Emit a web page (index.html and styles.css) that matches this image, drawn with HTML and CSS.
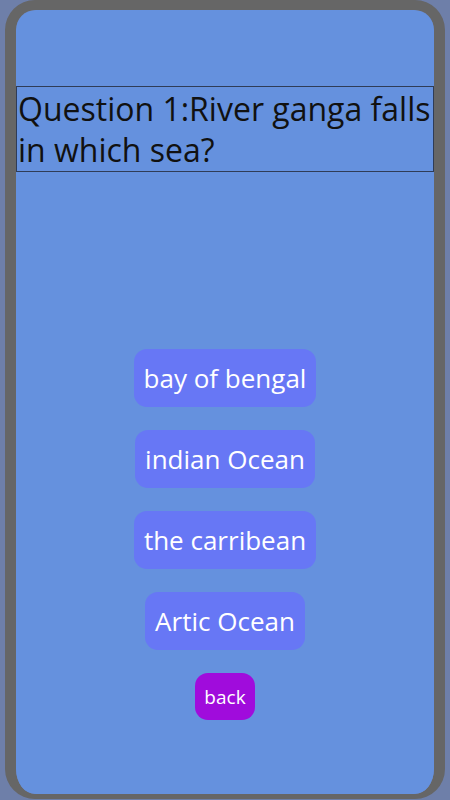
FILE: index.html
```html
<!DOCTYPE html>
<html lang="en">
<head>
    <meta charset="UTF-8">
    <meta name="viewport" content="width=device-width, initial-scale=1.0">
    <title>quiz</title>
    <link rel="stylesheet" href="styles.css">
</head>
<body>
    <main class="phone">
        <section class="screen">
            <h2 class="question">Question 1:River ganga falls in which sea?</h2>
            <div class="answers">
                <button type="button" class="btn-answer">bay of bengal</button>
                <button type="button" class="btn-answer">indian Ocean</button>
                <button type="button" class="btn-answer">the carribean</button>
                <button type="button" class="btn-answer">Artic Ocean</button>
                <button type="button" class="btn-back">back</button>
            </div>
        </section>
    </main>
</body>
</html>
```

FILE: styles.css
```css
body {
    margin: 0;
    background: #6e7fa9;
    font-family: "Open Sans", "Noto Sans", sans-serif;
}

.phone {
    margin: 0 5px;
    height: 784px;
    border: solid #666;
    border-width: 10px 11px 5px;
    border-radius: 30px;
    overflow: hidden;
}

.screen {
    height: 100%;
    background: #6591de;
    border-radius: 20px;
    padding-top: 76px;
    box-sizing: border-box;
}

.question {
    margin: 0;
    padding: 1px 1px;
    border: 1.5px solid #2f3c57;
    font-size: 32px;
    font-weight: normal;
    line-height: 41px;
    color: #111;
}

.answers {
    display: flex;
    flex-direction: column;
    align-items: center;
    gap: 23px;
    margin-top: 177px;
}

.btn-answer {
    height: 58px;
    padding: 0 10px;
    border: none;
    border-radius: 13px;
    background: #6777f5;
    color: #fff;
    font-family: inherit;
    font-size: 26px;
}

.btn-back {
    height: 47px;
    padding: 0 9px;
    border: none;
    border-radius: 13px;
    background: #a00cdc;
    color: #fff;
    font-family: inherit;
    font-size: 19px;
}
```
